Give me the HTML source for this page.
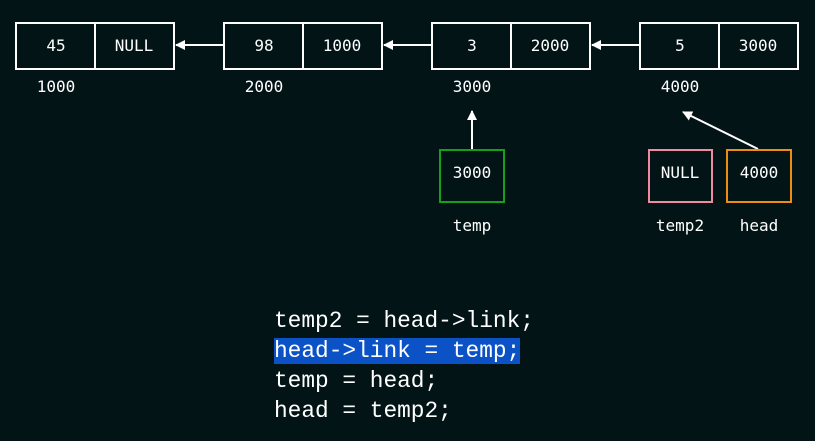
<!DOCTYPE html><html><head><style>
body{margin:0;width:815px;height:441px;background:#031416;overflow:hidden;font-family:"Liberation Mono","DejaVu Sans Mono",monospace;color:#fff}
svg{position:absolute;left:0;top:0}
.c{position:absolute;top:306px;left:274px;font-size:22.8px;line-height:30px;white-space:pre}
.hl{background:#0a52c6}
</style></head><body>
<svg width="815" height="441" font-family="DejaVu Sans Mono, monospace" font-size="16" fill="#fff">
<defs><marker id="a" markerWidth="10" markerHeight="10" refX="9" refY="5" orient="auto" markerUnits="userSpaceOnUse"><path d="M0,0L10,5L0,10z" fill="#fff"/></marker></defs>
<g stroke="#fff" stroke-width="2" fill="none">
<rect x="16" y="23" width="158" height="46"/><line x1="95" y1="23" x2="95" y2="69"/>
<rect x="224" y="23" width="158" height="46"/><line x1="303" y1="23" x2="303" y2="69"/>
<rect x="432" y="23" width="158" height="46"/><line x1="511" y1="23" x2="511" y2="69"/>
<rect x="640" y="23" width="158" height="46"/><line x1="719" y1="23" x2="719" y2="69"/>
<line x1="223" y1="45" x2="176" y2="45" marker-end="url(#a)"/>
<line x1="431" y1="45" x2="384" y2="45" marker-end="url(#a)"/>
<line x1="639" y1="45" x2="592" y2="45" marker-end="url(#a)"/>
<line x1="472" y1="149" x2="472" y2="111" marker-end="url(#a)"/>
<line x1="758" y1="149" x2="683" y2="112" marker-end="url(#a)"/>
</g>
<rect x="440" y="150" width="64" height="52" stroke="#17a017" stroke-width="2" fill="none"/>
<rect x="649" y="150" width="63" height="52" stroke="#f08aa0" stroke-width="2" fill="none"/>
<rect x="727" y="150" width="64" height="52" stroke="#f08c10" stroke-width="2" fill="none"/>
<g text-anchor="middle">
<text x="56" y="51">45</text><text x="134" y="51">NULL</text>
<text x="264" y="51">98</text><text x="342" y="51">1000</text>
<text x="472" y="51">3</text><text x="550" y="51">2000</text>
<text x="680" y="51">5</text><text x="758" y="51">3000</text>
<text x="56" y="92">1000</text><text x="264" y="92">2000</text><text x="472" y="92">3000</text><text x="680" y="92">4000</text>
<text x="472" y="178">3000</text><text x="680" y="178">NULL</text><text x="759" y="178">4000</text>
<text x="472" y="231">temp</text><text x="680" y="231">temp2</text><text x="759" y="231">head</text>
</g>
</svg>
<div class="c">temp2 = head-&gt;link;
<span class="hl">head-&gt;link = temp;</span>
temp = head;
head = temp2;</div>
</body></html>
